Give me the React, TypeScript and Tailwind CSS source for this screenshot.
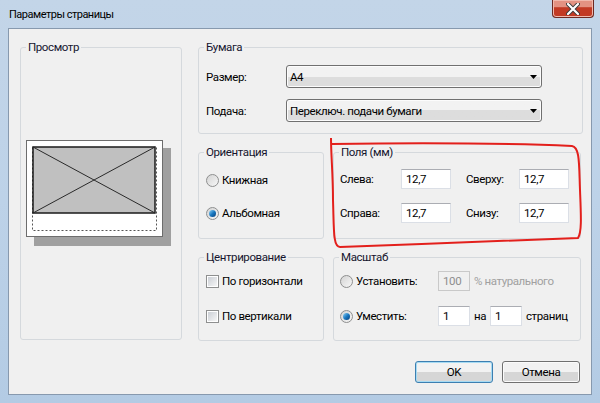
import React from "react";

// Windows 7 "Параметры страницы" dialog

const font = "font-['Roboto','Noto_Sans',sans-serif]";

function Group({ title, className, children }: { title: string; className: string; children?: React.ReactNode }) {
  return (
    <fieldset className={`shrink-0 rounded-[3px] border border-[#d5d9dd] ${className}`}>
      <legend className="ml-[5px] px-[2px] leading-[16px] text-[#15152e]">{title}</legend>
      {children}
    </fieldset>
  );
}

function Combo({ value }: { value: string }) {
  return (
    <div className="flex h-[23px] w-[256px] items-center justify-between rounded-[3px] border border-[#707070] bg-gradient-to-b from-[#f2f2f2] from-50% to-[#dddddd] to-50% pl-[3px] pr-[4px] shadow-[inset_0_0_0_1px_#fcfcfc]">
      <span>{value}</span>
      <svg width="7" height="4" viewBox="0 0 7 4">
        <path d="M0 0H7L3.5 4Z" fill="#000" />
      </svg>
    </div>
  );
}

function Field({ value, w = "w-[50px]", disabled = false }: { value: string; w?: string; disabled?: boolean }) {
  return (
    <div
      className={`flex h-[20px] ${w} items-center border pl-[4px] ${
        disabled
          ? "border-[#c9c9c9] bg-[#f0f0f0] text-[#8d8d8d]"
          : "border-[#dbdfe6] border-t-[#abadb3] bg-white"
      }`}
    >
      {value}
    </div>
  );
}

function Radio({ checked = false }: { checked?: boolean }) {
  return (
    <span className="flex h-[13px] w-[13px] shrink-0 items-center justify-center rounded-full border border-[#8e8f8f] bg-gradient-to-br from-[#d4d4d4] to-[#f7f7f7]">
      {checked && (
        <span className="h-[7px] w-[7px] rounded-full bg-gradient-to-br from-[#8ad4f5] via-[#1a7ac2] to-[#0b3f7a]" />
      )}
    </span>
  );
}

function Check() {
  return (
    <span className="flex h-[13px] w-[13px] shrink-0 items-center justify-center border border-[#8e8f8f] bg-white">
      <span className="h-[9px] w-[9px] bg-gradient-to-br from-[#cbcfd5] to-[#f6f6f6]" />
    </span>
  );
}

function Button({ label, primary = false }: { label: string; primary?: boolean }) {
  return (
    <div
      className={`flex h-[22px] w-[78px] items-center justify-center rounded-[3px] border bg-gradient-to-b from-[#f2f2f2] from-50% to-[#d6d6d6] to-50% ${
        primary ? "border-[#3c7fb1] shadow-[inset_0_0_0_1px_#a7dbf3]" : "border-[#707070] shadow-[inset_0_0_0_1px_#fbfbfb]"
      }`}
    >
      {label}
    </div>
  );
}

function Preview() {
  return (
    <svg width="148" height="108" viewBox="0 0 148 108" className="ml-[4px] mt-[84px]">
      <rect x="9" y="9" width="137" height="98" fill="#a0a0a0" />
      <rect x="1.5" y="1.5" width="136" height="96" fill="#fff" stroke="#6d6d6d" />
      <rect x="7.5" y="8.5" width="124" height="83" fill="none" stroke="#555" strokeDasharray="2 2" />
      <rect x="8" y="8" width="122" height="66" fill="#c0c0c0" stroke="#1a1a1a" strokeWidth="1.5" />
      <path d="M8 8L130 74M130 8L8 74" stroke="#2a2a2a" strokeWidth="1" />
    </svg>
  );
}

export default function App() {
  return (
    <div className={`relative h-[403px] w-[600px] overflow-hidden bg-gradient-to-b from-[#c3d5e8] via-[#bdd2e8] to-[#b3cbe4] text-[11.5px] leading-[16px] tracking-[-0.4px] text-black ${font}`}>
      {/* title bar */}
      <div className="flex h-[28px] items-start justify-between">
        <div className="pl-[9px] pt-[7px] text-[11px] tracking-[-0.5px] text-black">Параметры страницы</div>
        <div className="mr-[6px] flex h-[18px] w-[42px] items-center justify-center rounded-b-[4px] border border-t-0 border-[#6d2a22] bg-gradient-to-b from-[#e39282] from-40% to-[#c23a24] to-45% shadow-[inset_0_0_0_1px_#f0b9ad]">
          <svg width="14" height="12" viewBox="0 0 14 12">
            <path d="M2 1L12 11M12 1L2 11" stroke="#3b3b3b" strokeWidth="4" strokeLinecap="round" />
            <path d="M2 1L12 11M12 1L2 11" stroke="#fff" strokeWidth="2.2" strokeLinecap="round" />
          </svg>
        </div>
      </div>

      {/* client area */}
      <div className="ml-[8px] h-[367px] w-[584px] border border-[#8799ae] bg-[#f0f0f0] pl-[11px] pr-[8px] pt-[10px]">
        <div className="flex gap-[16px]">
          <Group title="Просмотр" className="h-[301px] w-[162px]">
            <Preview />
          </Group>

          <div className="flex w-[385px] shrink-0 flex-col gap-[10px]">
            <Group title="Бумага" className="h-[95px] w-[385px]">
              <div className="flex flex-col gap-[11px] pl-[7px] pt-[10px]">
                <div className="flex items-center">
                  <span className="w-[80px]">Размер:</span>
                  <Combo value="A4" />
                </div>
                <div className="flex items-center">
                  <span className="w-[80px]">Подача:</span>
                  <Combo value="Переключ. подачи бумаги" />
                </div>
              </div>
            </Group>

            <div className="flex w-[383px] gap-[9px]">
              <Group title="Ориентация" className="h-[95px] w-[126px]">
                <div className="flex flex-col gap-[17px] pl-[7px] pt-[12px]">
                  <label className="flex h-[16px] items-center gap-[3px]">
                    <Radio />
                    <span>Книжная</span>
                  </label>
                  <label className="flex h-[16px] items-center gap-[3px]">
                    <Radio checked />
                    <span>Альбомная</span>
                  </label>
                </div>
              </Group>
              <Group title="Поля (мм)" className="h-[95px] w-[248px]">
                <div className="flex flex-col gap-[14px] pl-[6px] pt-[9px]">
                  <div className="flex items-center">
                    <span className="w-[61px]">Слева:</span>
                    <Field value="12,7" />
                    <span className="ml-[15px] w-[53px]">Сверху:</span>
                    <Field value="12,7" />
                  </div>
                  <div className="flex items-center">
                    <span className="w-[61px]">Справа:</span>
                    <Field value="12,7" />
                    <span className="ml-[15px] w-[53px]">Снизу:</span>
                    <Field value="12,7" />
                  </div>
                </div>
              </Group>
            </div>

            <div className="flex w-[383px] gap-[9px]">
              <Group title="Центрирование" className="h-[92px] w-[126px]">
                <div className="flex flex-col gap-[19px] pl-[7px] pt-[8px]">
                  <label className="flex h-[16px] items-center gap-[3px]">
                    <Check />
                    <span>По горизонтали</span>
                  </label>
                  <label className="flex h-[16px] items-center gap-[3px]">
                    <Check />
                    <span>По вертикали</span>
                  </label>
                </div>
              </Group>
              <Group title="Масштаб" className="h-[92px] w-[248px]">
                <div className="flex flex-col gap-[15px] pl-[6px] pt-[6px]">
                  <div className="flex items-center">
                    <Radio />
                    <span className="ml-[3px] w-[82px]">Установить:</span>
                    <Field value="100" w="w-[32px]" disabled />
                    <span className="ml-[4px] text-[#a0a0a0]">% натурального</span>
                  </div>
                  <div className="flex items-center">
                    <Radio checked />
                    <span className="ml-[3px] w-[82px]">Уместить:</span>
                    <Field value="1" w="w-[32px]" />
                    <span className="ml-[4px] w-[16px]">на</span>
                    <Field value="1" w="w-[32px]" />
                    <span className="ml-[4px]">страниц</span>
                  </div>
                </div>
              </Group>
            </div>
          </div>
        </div>

        <div className="mt-[20px] flex justify-end gap-[9px] pr-[3px]">
          <Button label="OK" primary />
          <Button label="Отмена" />
        </div>
      </div>

      {/* hand-drawn red mark around margins group */}
      <svg className="pointer-events-none absolute left-0 top-0" width="600" height="403" viewBox="0 0 600 403">
        <path
          d="M332 144C400 143 500 143 572 146C580 147 579 165 580 190C581 215 582 232 578 238C520 240 420 244 340 247C333 247 334 230 333 200C333 175 331 155 331 138"
          fill="none"
          stroke="#e3201c"
          strokeWidth="2"
        />
      </svg>
    </div>
  );
}
